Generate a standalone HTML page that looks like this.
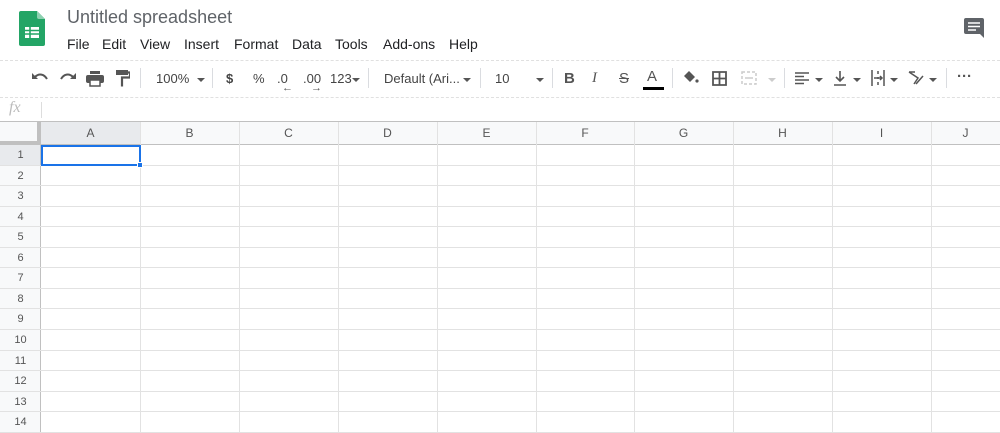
<!DOCTYPE html><html><head><meta charset="utf-8"><style>
*{margin:0;padding:0;box-sizing:border-box}
body{width:1000px;height:433px;overflow:hidden;background:#fff;font-family:"Liberation Sans",Arial,sans-serif;position:relative;color:#3c4043}
.a{position:absolute}
.t{position:absolute;font-size:13px;color:#444;}
.menu span{position:absolute;top:36px;font-size:14px;color:#202124}
.ic{position:absolute;top:68px}
.hl{position:absolute;left:0;width:1000px;height:1px;background:#e2e2e2}
.vl{position:absolute;top:122px;width:1px;height:311px;background:#e2e2e2}
.ch{position:absolute;top:122px;height:23px;font-size:12px;color:#555;text-align:center;line-height:23px}
.rh{position:absolute;left:0;width:41px;height:20px;line-height:20px;font-size:11px;color:#555;text-align:center}
.sep{position:absolute;top:68px;width:1px;height:20px;background:#dadce0}
.dd{position:absolute;width:0;height:0;border-left:4px solid transparent;border-right:4px solid transparent;border-top:4px solid #555}
</style></head><body>
<svg class="a" style="left:19px;top:11px" width="26" height="35" viewBox="0 0 26 35"><path d="M2 0h16l8 8v25a2 2 0 0 1-2 2H2a2 2 0 0 1-2-2V2a2 2 0 0 1 2-2z" fill="#23a566"/><path d="M18 0l8 8h-6a2 2 0 0 1-2-2z" fill="#8ed1b1"/><path d="M6 16h14v11H6z" fill="#fff"/><path d="M6 19.5h14M6 23h14M11 16v11" stroke="#23a566" stroke-width="1.6"/></svg>
<div class="a" style="left:67px;top:7px;font-size:18px;color:#5f6368">Untitled spreadsheet</div>
<div class="menu"><span style="left:67px">File</span><span style="left:102px">Edit</span><span style="left:140px">View</span><span style="left:184px">Insert</span><span style="left:234px">Format</span><span style="left:292px">Data</span><span style="left:335px">Tools</span><span style="left:383px">Add-ons</span><span style="left:449px">Help</span></div>
<svg class="a" style="left:963px;top:17px" width="22" height="22" viewBox="0 0 22 22"><path d="M3 1h16a2 2 0 0 1 2 2v18l-4-4H3a2 2 0 0 1-2-2V3a2 2 0 0 1 2-2z" fill="#5f6368"/><path d="M5 6h12M5 9.5h12M5 13h8" stroke="#fff" stroke-width="1.6"/></svg>
<div class="a" style="left:0;top:60px;width:1000px;border-top:1px dashed #e0e0e0"></div>
<div class="a" style="left:0;top:97px;width:1000px;border-top:1px dashed #e0e0e0"></div>
<svg class="ic" style="left:31px;top:71px" width="18" height="14" viewBox="0 0 18 14"><path d="M4 6c4-4 9-3 12 2" stroke="#555" stroke-width="2" fill="none"/><path d="M1 2v6h6z" fill="#555"/></svg>
<svg class="ic" style="left:59px;top:71px" width="18" height="14" viewBox="0 0 18 14"><path d="M14 6c-4-4-9-3-12 2" stroke="#555" stroke-width="2" fill="none"/><path d="M17 2v6h-6z" fill="#555"/></svg>
<svg class="ic" style="left:86px;top:71px" width="18" height="16" viewBox="0 0 18 16"><rect x="4" y="0" width="10" height="3" fill="#555"/><rect x="0" y="4" width="18" height="8" rx="2" fill="#555"/><rect x="4" y="9" width="10" height="6" fill="#fff" stroke="#555" stroke-width="1.5"/></svg>
<svg class="ic" style="left:116px;top:70px" width="14" height="18" viewBox="0 0 14 18"><rect x="0" y="0" width="12" height="5" fill="#555"/><path d="M12 2.5h2v5H6v9" stroke="#555" stroke-width="2.2" fill="none"/></svg>
<div class="sep" style="left:140px"></div>
<div class="t" style="left:156px;top:71px">100%</div><div class="dd" style="left:197px;top:78px"></div>
<div class="sep" style="left:212px"></div>
<div class="t" style="left:226px;top:71px;font-weight:bold">$</div>
<div class="t" style="left:253px;top:71px">%</div>
<div class="t" style="left:277px;top:71px">.0</div><div class="a" style="left:282px;top:82px;font-size:11px;color:#555">←</div>
<div class="t" style="left:303px;top:71px">.00</div><div class="a" style="left:311px;top:82px;font-size:11px;color:#555">→</div>
<div class="t" style="left:330px;top:71px">123</div><div class="dd" style="left:352px;top:78px"></div>
<div class="sep" style="left:368px"></div>
<div class="t" style="left:384px;top:71px">Default (Ari...</div><div class="dd" style="left:463px;top:78px"></div>
<div class="sep" style="left:480px"></div>
<div class="t" style="left:495px;top:71px">10</div><div class="dd" style="left:536px;top:78px"></div>
<div class="sep" style="left:552px"></div>
<div class="t" style="left:564px;top:70px;font-size:15px;font-weight:bold;color:#555">B</div>
<div class="t" style="left:592px;top:70px;font-size:15px;font-style:italic;color:#555;font-family:'Liberation Serif',serif">I</div>
<div class="t" style="left:619px;top:70px;font-size:15px;color:#555;text-decoration:line-through">S</div>
<div class="t" style="left:647px;top:68px;font-size:15px;color:#555">A</div><div class="a" style="left:643px;top:87px;width:21px;height:3px;background:#000"></div>
<div class="sep" style="left:672px"></div>
<svg class="ic" style="left:683px;top:70px" width="16" height="16" viewBox="0 0 16 16"><path d="M6 1l6 6-5 5-6-6z" fill="#555"/><circle cx="14" cy="11" r="1.6" fill="#555"/></svg>
<svg class="ic" style="left:712px;top:71px" width="15" height="15" viewBox="0 0 15 15"><path d="M1 1h13v13H1zM7.5 1v13M1 7.5h13" stroke="#555" stroke-width="1.8" fill="none"/></svg>
<svg class="ic" style="left:741px;top:71px" width="16" height="14" viewBox="0 0 16 14"><path d="M1 1h14v12H1z" stroke="#ccc" stroke-width="1.5" fill="none" stroke-dasharray="3 2"/><path d="M4 7h8" stroke="#ccc" stroke-width="1.5"/></svg><div class="dd" style="left:768px;top:78px;border-top-color:#ccc"></div>
<div class="sep" style="left:784px"></div>
<svg class="ic" style="left:795px;top:72px" width="14" height="13" viewBox="0 0 14 13"><path d="M0 1h14M0 4.5h9M0 8h14M0 11.5h9" stroke="#555" stroke-width="1.6"/></svg><div class="dd" style="left:815px;top:78px"></div>
<svg class="ic" style="left:834px;top:71px" width="12" height="15" viewBox="0 0 12 15"><path d="M6 0v10M2 6l4 4 4-4M0 14h12" stroke="#555" stroke-width="1.6" fill="none"/></svg><div class="dd" style="left:853px;top:78px"></div>
<svg class="ic" style="left:871px;top:70px" width="14" height="16" viewBox="0 0 14 16"><path d="M1 0v16M13 0v16M7 1v3M7 7v2M7 12v3M3 8h8M9 6l2 2-2 2" stroke="#555" stroke-width="1.5" fill="none"/></svg><div class="dd" style="left:890px;top:78px"></div>
<svg class="ic" style="left:908px;top:70px" width="16" height="16" viewBox="0 0 16 16"><path d="M1 2l9 6-4 6M1 2h6M8 14l7-8" stroke="#555" stroke-width="1.5" fill="none"/></svg><div class="dd" style="left:929px;top:78px"></div>
<div class="sep" style="left:946px"></div>
<div class="t" style="left:957px;top:68px;font-size:15px;font-weight:bold;color:#555">···</div>
<div class="a" style="left:9px;top:99px;font-size:16px;font-style:italic;color:#bbb;font-family:'Liberation Serif',serif">fx</div>
<div class="a" style="left:41px;top:102px;width:1px;height:16px;background:#ddd"></div>
<div class="a" style="left:0;top:121px;width:1000px;height:1px;background:#c0c0c0"></div>
<div class="a" style="left:0;top:122px;width:1000px;height:23px;background:#f8f9fa"></div>
<div class="a" style="left:0;top:145px;width:41px;height:288px;background:#f8f9fa"></div>
<div class="a" style="left:41px;top:122px;width:99px;height:23px;background:#e8eaed"></div>
<div class="a" style="left:0;top:145px;width:41px;height:20px;background:#e8eaed"></div>
<div class="a" style="left:0;top:122px;width:41px;height:23px;border-right:4px solid #c0c0c0;border-bottom:4px solid #c0c0c0"></div>
<div class="a" style="left:0;top:144px;width:1000px;height:1px;background:#c0c0c0"></div>
<div class="a" style="left:40px;top:122px;width:1px;height:311px;background:#c0c0c0"></div>
<div class="vl" style="left:140px"></div><div class="vl" style="left:239px"></div><div class="vl" style="left:338px"></div><div class="vl" style="left:437px"></div><div class="vl" style="left:536px"></div><div class="vl" style="left:634px"></div><div class="vl" style="left:733px"></div><div class="vl" style="left:832px"></div><div class="vl" style="left:931px"></div>
<div class="ch" style="left:41px;width:99px">A</div><div class="ch" style="left:140px;width:99px">B</div><div class="ch" style="left:239px;width:99px">C</div><div class="ch" style="left:338px;width:99px">D</div><div class="ch" style="left:437px;width:99px">E</div><div class="ch" style="left:536px;width:98px">F</div><div class="ch" style="left:634px;width:99px">G</div><div class="ch" style="left:733px;width:99px">H</div><div class="ch" style="left:832px;width:99px">I</div><div class="ch" style="left:931px;width:69px">J</div>
<div class="hl" style="top:165px"></div><div class="hl" style="top:185px"></div><div class="hl" style="top:206px"></div><div class="hl" style="top:226px"></div><div class="hl" style="top:247px"></div><div class="hl" style="top:267px"></div><div class="hl" style="top:288px"></div><div class="hl" style="top:308px"></div><div class="hl" style="top:329px"></div><div class="hl" style="top:350px"></div><div class="hl" style="top:370px"></div><div class="hl" style="top:391px"></div><div class="hl" style="top:411px"></div><div class="hl" style="top:432px"></div>
<div class="rh" style="top:145px">1</div><div class="rh" style="top:166px">2</div><div class="rh" style="top:186px">3</div><div class="rh" style="top:207px">4</div><div class="rh" style="top:227px">5</div><div class="rh" style="top:248px">6</div><div class="rh" style="top:268px">7</div><div class="rh" style="top:289px">8</div><div class="rh" style="top:309px">9</div><div class="rh" style="top:330px">10</div><div class="rh" style="top:351px">11</div><div class="rh" style="top:371px">12</div><div class="rh" style="top:392px">13</div><div class="rh" style="top:412px">14</div>
<div class="a" style="left:41px;top:145px;width:100px;height:21px;border:2px solid #1a73e8"></div>
<div class="a" style="left:137px;top:162px;width:6px;height:6px;background:#1a73e8;border:1px solid #fff"></div>
</body></html>
